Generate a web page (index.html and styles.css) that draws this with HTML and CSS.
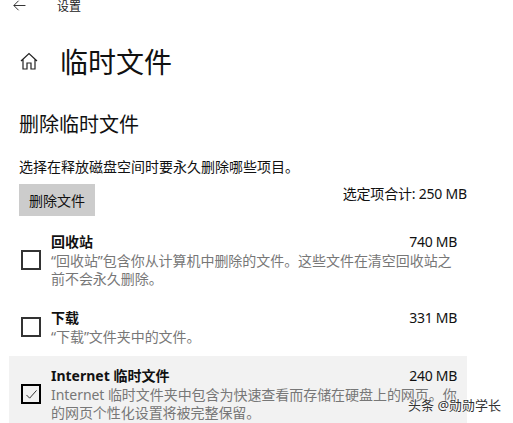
FILE: index.html
```html
<!DOCTYPE html>
<html lang="zh-CN">
<head>
  <meta charset="UTF-8">
  <title>设置</title>
  <link rel="stylesheet" href="styles.css">
</head>
<body>
  <div class="top-bar">
    <svg class="back-icon" viewBox="0 0 14 12">
      <path d="M13.5 6H1M6 .8 .8 6 6 11.2"/>
    </svg>
    <span class="top-title">设置</span>
  </div>

  <div class="page-head">
    <svg class="home-icon" viewBox="0 0 18 18">
      <path d="M1 9 9 1.5 17 9M3 7.5V17H7V11H11V17H15V7.5"/>
    </svg>
    <h1 class="page-title">临时文件</h1>
  </div>

  <h2 class="section-title">删除临时文件</h2>
  <p class="section-desc">选择在释放磁盘空间时要永久删除哪些项目。</p>

  <div class="action-row">
    <button class="delete-btn">删除文件</button>
    <span class="total">选定项合计: 250 MB</span>
  </div>

  <div class="file-list">
    <div class="file-item item-recycle">
      <span class="check"></span>
      <div class="file-text">
        <div class="file-head">
          <span class="file-name">回收站</span>
          <span class="file-size">740 MB</span>
        </div>
        <p class="file-desc">“回收站”包含你从计算机中删除的文件。这些文件在清空回收站之<br>前不会永久删除。</p>
      </div>
    </div>
    <div class="file-item item-download">
      <span class="check"></span>
      <div class="file-text">
        <div class="file-head">
          <span class="file-name">下载</span>
          <span class="file-size">331 MB</span>
        </div>
        <p class="file-desc">“下载”文件夹中的文件。</p>
      </div>
    </div>
    <div class="file-item item-temp selected">
      <span class="check checked">
        <svg viewBox="0 0 14 12"><path d="M1.5 6.5 5 10 12.5 1.5"/></svg>
      </span>
      <div class="file-text">
        <div class="file-head">
          <span class="file-name">Internet 临时文件</span>
          <span class="file-size">240 MB</span>
        </div>
        <p class="file-desc">Internet 临时文件夹中包含为快速查看而存储在硬盘上的网页。你<br>的网页个性化设置将被完整保留。</p>
      </div>
    </div>
  </div>

  <div class="watermark">头条 @勋勋学长</div>
</body>
</html>
```

FILE: styles.css
```css
html, body {
  height: 423px;
  overflow: hidden;
}
body {
  margin: 0;
  position: relative;
  background: #fff;
  color: #111;
  font-family: "Noto Sans", "Noto Sans CJK SC", sans-serif;
  font-size: 14px;
}
.top-bar {
  display: flex;
  align-items: center;
  height: 14px;
  padding-left: 13px;
}
.back-icon {
  width: 13px;
  height: 11px;
  margin-top: -4px;
  fill: none;
  stroke: #222;
  stroke-width: 1;
}
.top-title {
  margin-left: 31px;
  font-size: 12px;
  line-height: 14px;
  color: #222;
}
.page-head {
  display: flex;
  align-items: center;
  height: 40px;
  margin-top: 28px;
  padding-left: 20px;
}
.home-icon {
  width: 18px;
  height: 18px;
  margin-top: -2px;
  fill: none;
  stroke: #222;
  stroke-width: 1.2;
}
.page-title {
  margin: 0 0 0 22px;
  font-size: 28px;
  font-weight: 400;
  line-height: 40px;
}
.section-title {
  margin: 29px 0 0 19px;
  font-size: 20px;
  font-weight: 400;
  line-height: 28px;
}
.section-desc {
  margin: 18px 0 0 19px;
  line-height: 20px;
}
.action-row {
  display: flex;
  align-items: flex-start;
  justify-content: space-between;
  width: 448px;
  margin: 7px 0 0 19px;
}
.delete-btn {
  width: 76px;
  height: 32px;
  padding: 0;
  border: 0;
  background: #ccc;
  color: #111;
  font: inherit;
}
.total {
  line-height: 20px;
  letter-spacing: -0.2px;
}
.file-list {
  display: flex;
  flex-direction: column;
  width: 458px;
  margin: 15px 0 0 9px;
}
.file-item {
  display: flex;
  align-items: center;
  padding: 0 10px 0 12px;
}
.item-recycle {
  height: 58px;
}
.item-download {
  margin-top: 18px;
  height: 40px;
}
.item-temp {
  margin-top: 9px;
  height: 67px;
  padding-top: 9px;
  box-sizing: border-box;
}
.selected {
  background: #f2f2f2;
}
.check {
  flex: none;
  display: flex;
  align-items: center;
  justify-content: center;
  box-sizing: border-box;
  width: 20px;
  height: 20px;
  border: 2px solid #333;
}
.check.checked {
  border-color: #000;
}
.check svg {
  width: 13px;
  height: 11px;
  fill: none;
  stroke: #222;
  stroke-width: 1;
}
.file-text {
  flex: 1;
  margin-left: 10px;
}
.file-head {
  display: flex;
  justify-content: space-between;
  line-height: 20px;
}
.file-name {
  font-weight: 700;
}
.file-size {
  letter-spacing: -0.3px;
}
.file-desc {
  margin: 0;
  color: #777;
  line-height: 18px;
  white-space: nowrap;
  letter-spacing: -0.05px;
}
.watermark {
  position: absolute;
  top: 396px;
  left: 408px;
  color: #333;
  font-size: 13px;
  line-height: 18px;
  white-space: nowrap;
  text-shadow: 0 0 2px #fff, 0 0 2px #fff;
}
```
